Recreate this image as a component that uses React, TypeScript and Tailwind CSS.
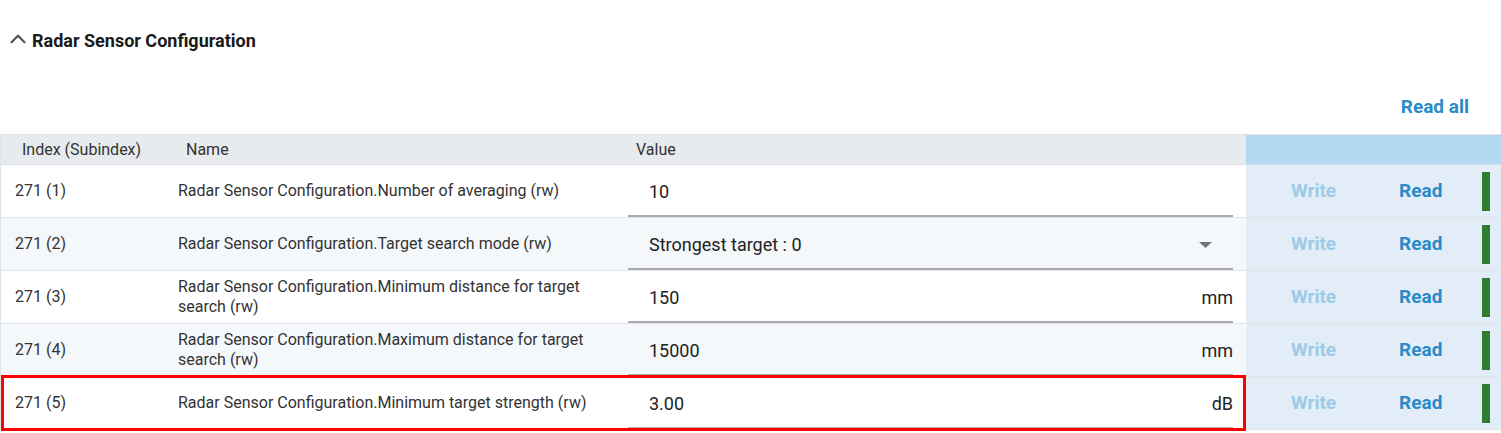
import { ChevronUp } from "lucide-react";

type Param = {
  index: string;
  name: string;
  value: string;
  unit?: string;
  select?: boolean;
};

const PARAMS: Param[] = [
  { index: "271 (1)", name: "Radar Sensor Configuration.Number of averaging (rw)", value: "10" },
  { index: "271 (2)", name: "Radar Sensor Configuration.Target search mode (rw)", value: "Strongest target : 0", select: true },
  { index: "271 (3)", name: "Radar Sensor Configuration.Minimum distance for target search (rw)", value: "150", unit: "mm" },
  { index: "271 (4)", name: "Radar Sensor Configuration.Maximum distance for target search (rw)", value: "15000", unit: "mm" },
  { index: "271 (5)", name: "Radar Sensor Configuration.Minimum target strength (rw)", value: "3.00", unit: "dB" },
];

const COLS = "grid grid-cols-[163px_457px_625px_1fr]";

function ParamRow({ p, i, highlighted }: { p: Param; i: number; highlighted?: boolean }) {
  const bg = i % 2 === 0 ? "bg-white" : "bg-[#f5f8fb]";
  return (
    <div className={`${COLS} relative h-[53px] border-b border-[#e1e4e8]`}>
      <div className={`${bg} flex items-center pl-[14px] text-[16px] text-[#333]`}>{p.index}</div>
      <div className={`${bg} flex items-center pl-[14px] pr-[20px] text-[16px] leading-[20px] text-[#333]`}>{p.name}</div>
      <div className={`${bg} pl-[7px] pr-[13px]`}>
        <div className="flex h-full items-center border-b-2 border-[#ababab] pl-[21px] text-[18px] text-[#222]">
          <span className="flex-1 pt-[2px]">{p.value}</span>
          {p.unit && <span className="pt-[2px]">{p.unit}</span>}
          {p.select && (
            <svg width="13" height="6" viewBox="0 0 13 6" className="mr-[21px] mt-[4px]">
              <path d="M0 0h13L6.5 6z" fill="#757575" />
            </svg>
          )}
        </div>
      </div>
      <div className="flex items-center bg-[#e3edf7] text-[19px] font-bold">
        <span className="ml-[45px] text-[#9ccbe8]">Write</span>
        <span className="ml-[63px] text-[#2a8bc6]">Read</span>
        <span className="ml-[40px] h-[39px] w-[8px] bg-[#2e7d32]" />
      </div>
      {highlighted && (
        <div className="pointer-events-none absolute -top-[2px] bottom-[-2px] left-0 w-[1245px] border-[3px] border-[#ff0000]" />
      )}
    </div>
  );
}

export default function App() {
  return (
    <div className="h-[433px] w-[1501px] overflow-hidden bg-white font-['Roboto',sans-serif]">
      <div className="flex h-[28px] items-center gap-[1px] pl-[5px] mt-[26px]">
        <ChevronUp size={26} strokeWidth={2.1} className="-mt-[3px] text-[#555]" />
        <h2 className="text-[18px] font-bold text-[#1a1a1a]">Radar Sensor Configuration</h2>
      </div>

      <div className="flex h-[28px] items-center justify-end pr-[32px] mt-[39px]">
        <button className="text-[19px] font-bold text-[#2a8bc6]">Read all</button>
      </div>

      <div className="mt-[13px] border-l border-t border-[#e1e4e8]">
        <div className={`${COLS} h-[30px] border-b border-[#dcdfe3] text-[16px] text-[#333]`}>
          <div className="flex items-center bg-[#e8ebee] pl-[21px]">Index (Subindex)</div>
          <div className="flex items-center bg-[#e8ebee] pl-[22px]">Name</div>
          <div className="flex items-center bg-[#e8ebee] pl-[15px]">Value</div>
          <div className="bg-[#b4daf3]" />
        </div>
        {PARAMS.map((p, i) => (
          <ParamRow key={p.index} p={p} i={i} highlighted={i === PARAMS.length - 1} />
        ))}
      </div>
    </div>
  );
}
